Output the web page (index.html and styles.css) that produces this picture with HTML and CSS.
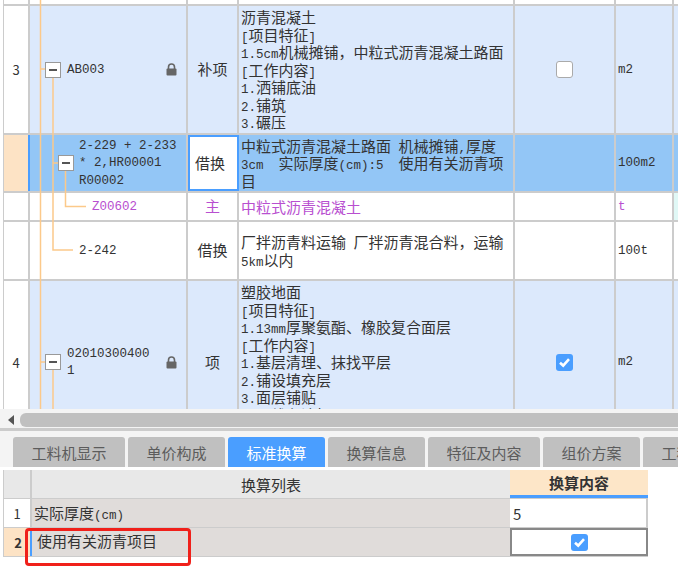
FILE: index.html
```html
<!DOCTYPE html>
<html lang="zh-CN">
<head>
  <meta charset="UTF-8" />
  <title>标准换算</title>
  <link rel="stylesheet" href="styles.css">
</head>
<body>
  <div class="sheet">
    <div class="row stub">
      <div class="cell"></div><div class="cell"></div><div class="cell"></div><div class="cell"></div><div class="cell"></div><div class="cell"></div><div class="cell last"></div>
    </div>

    <div class="row item r3">
      <div class="cell num">3</div>
      <div class="cell tree lvl1">
        <span class="box"></span><span class="code">AB003</span>
        <svg class="lock" width="11" height="13" viewBox="0 0 11 13"><path d="M2.5 6V4a3 3 0 0 1 6 0v2" fill="none" stroke="#666" stroke-width="1.6"/><rect x="0.5" y="5.5" width="10" height="7" rx="1" fill="#666"/></svg>
      </div>
      <div class="cell type">补项</div>
      <div class="cell desc"><div>沥青混凝土<br><span class="n">[</span>项目特征<span class="n">]</span><br><span class="n">1.5cm</span>机械摊铺，中粒式沥青混凝土路面<br><span class="n">[</span>工作内容<span class="n">]</span><br><span class="n">1.</span>洒铺底油<br><span class="n">2.</span>铺筑<br><span class="n">3.</span>碾压</div></div>
      <div class="cell check"><span class="cb"></span></div>
      <div class="cell unit">m2</div>
      <div class="cell last"></div>
    </div>

    <div class="row sel">
      <div class="cell num"></div>
      <div class="cell tree lvl2">
        <span class="box"></span><span class="code">2-229 + 2-233<br>* 2,HR00001<br>R00002</span>
      </div>
      <div class="cell type editing">借换</div>
      <div class="cell desc"><div>中粒式沥青混凝土路面<span class="n">&nbsp;</span>机械摊铺<span class="n">,</span>厚度<br><span class="n">3cm&nbsp;&nbsp;</span>实际厚度<span class="n">(cm):5&nbsp;&nbsp;</span>使用有关沥青项<br>目</div></div>
      <div class="cell check"></div>
      <div class="cell unit">100m2</div>
      <div class="cell last"></div>
    </div>

    <div class="row main">
      <div class="cell num"></div>
      <div class="cell tree lvl3"><span class="code">Z00602</span></div>
      <div class="cell type">主</div>
      <div class="cell desc"><div>中粒式沥青混凝土</div></div>
      <div class="cell check"></div>
      <div class="cell unit">t</div>
      <div class="cell last"></div>
    </div>

    <div class="row sub">
      <div class="cell num"></div>
      <div class="cell tree lvl2b"><span class="code">2-242</span></div>
      <div class="cell type">借换</div>
      <div class="cell desc"><div>厂拌沥青料运输<span class="n">&nbsp;</span>厂拌沥青混合料，运输<br><span class="n">5km</span>以内</div></div>
      <div class="cell check"></div>
      <div class="cell unit">100t</div>
      <div class="cell last"></div>
    </div>

    <div class="row item r4">
      <div class="cell num">4</div>
      <div class="cell tree lvl1">
        <span class="box"></span><span class="code">02010300400<br>1</span>
        <svg class="lock" width="11" height="13" viewBox="0 0 11 13"><path d="M2.5 6V4a3 3 0 0 1 6 0v2" fill="none" stroke="#666" stroke-width="1.6"/><rect x="0.5" y="5.5" width="10" height="7" rx="1" fill="#666"/></svg>
      </div>
      <div class="cell type">项</div>
      <div class="cell desc"><div>塑胶地面<br><span class="n">[</span>项目特征<span class="n">]</span><br><span class="n">1.13mm</span>厚聚氨酯、橡胶复合面层<br><span class="n">[</span>工作内容<span class="n">]</span><br><span class="n">1.</span>基层清理、抹找平层<br><span class="n">2.</span>铺设填充层<br><span class="n">3.</span>面层铺贴<br><span class="n">4.</span>画线条涂标</div></div>
      <div class="cell check">
        <span class="cb on"><svg width="17" height="17" viewBox="0 0 17 17"><path d="M4 8.8l3.2 2.8 5.8-6.4" fill="none" stroke="#fff" stroke-width="2.6"/></svg></span>
      </div>
      <div class="cell unit">m2</div>
      <div class="cell last"></div>
    </div>

    <svg class="links" width="100" height="409" viewBox="0 0 100 409">
      <g fill="none" stroke="#fcc98a" stroke-width="1.5">
        <path d="M40.5 0V409M40 69H45M40 362H45"/>
        <path d="M53 77V250H73M53 163H58M53 370V409"/>
        <path d="M65.5 171V206.5H86"/>
      </g>
    </svg>
  </div>

  <div class="hscroll">
    <span class="arrow"></span>
    <div class="thumb"></div>
  </div>

  <div class="tabs">
    <div class="tab w1">工料机显示</div>
    <div class="tab">单价构成</div>
    <div class="tab active">标准换算</div>
    <div class="tab">换算信息</div>
    <div class="tab w1">特征及内容</div>
    <div class="tab">组价方案</div>
    <div class="tab w1">工程量明细</div>
  </div>

  <div class="convert">
    <div class="c-row head">
      <div class="c-num"></div>
      <div class="c-name">换算列表</div>
      <div class="c-val">换算内容</div>
    </div>
    <div class="c-row">
      <div class="c-num">1</div>
      <div class="c-name"><span>实际厚度<span class="n">(cm)</span></span></div>
      <div class="c-val">5</div>
    </div>
    <div class="c-row current">
      <div class="c-num">2</div>
      <div class="c-name"><span>使用有关沥青项目</span></div>
      <div class="c-val">
        <span class="cb on"><svg width="17" height="17" viewBox="0 0 17 17"><path d="M4 8.8l3.2 2.8 5.8-6.4" fill="none" stroke="#fff" stroke-width="2.6"/></svg></span>
      </div>
    </div>
    <div class="mark"></div>
  </div>
</body>
</html>
```

FILE: styles.css
```css
html, body {
  margin: 0;
  height: 574px;
  overflow: hidden;
  background: white;
}
body {
  font-family: "Noto Sans CJK SC", sans-serif;
  font-size: 15px;
  color: #333;
}
.n, .code, .unit {
  font-family: "Liberation Mono", monospace;
  font-size: 12.5px;
}
.n {
  line-height: 0;
}

/* upper table */
.sheet {
  position: relative;
  height: 409px;
  margin-left: 3px;
  overflow: hidden;
  border-left: 1px solid #ccc;
}
.row {
  display: grid;
  grid-template-columns: 26px 158px 51px 276px 101px 58px 1fr;
  box-sizing: border-box;
  border-bottom: 2px solid #ccc;
}
.cell {
  box-sizing: border-box;
  border-right: 2px solid #ccc;
  display: flex;
  align-items: center;
  min-width: 0;
}
.cell.last {
  border-right: none;
}
.stub { height: 6px; }
.r3 { height: 129px; }
.sel { height: 58px; }
.main { height: 29px; }
.sub { height: 59px; }
.r4 { height: 164px; }

.item .cell { background: #dce9fc; }
.item .num { background: white; }
.sel .cell { background: #93c6f6; }
.sel .num { background: #fde3c5; border-right: 2px solid #4a9eff; }
.main { color: #b84fd0; }
.main .last { background: #e0f8f6; }

.num {
  justify-content: center;
  font-size: 13px;
}
.lvl1 { padding-left: 15px; }
.lvl2 { padding-left: 28px; }
.lvl2b { padding-left: 49px; }
.lvl3 { padding-left: 62px; }
.box {
  flex: none;
  box-sizing: border-box;
  width: 16px;
  height: 16px;
  margin-right: 6px;
  background: white;
  border: 1px solid #999;
  position: relative;
  z-index: 1;
}
.lvl2 .box { margin-right: 5px; }
.box::after {
  content: "";
  display: block;
  width: 8px;
  height: 2px;
  margin: 6px auto 0;
  background: #555;
}
.code {
  padding-top: 2px;
  line-height: 17.5px;
}
.lock {
  margin-left: auto;
  margin-right: 9px;
}
.type {
  justify-content: center;
  padding-bottom: 2px;
}
.row .type.editing {
  justify-content: flex-start;
  padding-left: 5px;
  background: white;
  border: 2px solid #4a9eff;
}
.desc {
  padding-left: 2px;
  line-height: 17.5px;
  white-space: nowrap;
  overflow: hidden;
}
.r4 .desc { align-items: flex-start; padding-top: 2px; }
.check {
  justify-content: center;
}
.cb {
  box-sizing: border-box;
  display: block;
  width: 17px;
  height: 17px;
  background: white;
  border: 1px solid #aaa;
  border-radius: 3px;
}
.cb.on {
  background: #4a9eff;
  border: none;
}
.cb svg { display: block; }
.unit { padding-left: 2px; }
.links {
  position: absolute;
  left: -4px;
  top: 0;
  pointer-events: none;
}

/* scrollbar */
.hscroll {
  display: flex;
  align-items: center;
  box-sizing: border-box;
  height: 22px;
  padding: 4px 0 1px 8px;
  background: #f4f4f4;
  border-bottom: 3px solid #ccc;
}
.arrow {
  width: 0;
  height: 0;
  margin-right: 6px;
  border-top: 5px solid transparent;
  border-bottom: 5px solid transparent;
  border-right: 6px solid #555;
}
.thumb {
  flex: 1;
  height: 14px;
  background: #c0c0c0;
  border-radius: 6px 0 0 6px;
}

/* tabs */
.tabs {
  display: flex;
  gap: 3px;
  height: 36px;
  box-sizing: border-box;
  padding: 6px 0 0 13px;
  background: #f4f4f4;
  overflow: hidden;
}
.tab {
  flex: none;
  width: 97px;
  height: 30px;
  line-height: 32px;
  text-align: center;
  background: #c0c0c0;
  color: #5c5c5c;
  border-radius: 3px 3px 0 0;
  white-space: nowrap;
  overflow: hidden;
}
.tab.w1 { width: 112px; }
.tab.active {
  background: #4a9eff;
  color: white;
}

/* lower table */
.convert {
  position: relative;
  margin: 3px 0 0 3px;
  width: 645px;
}
.c-row {
  display: grid;
  grid-template-columns: 29px 478px 138px;
  height: 29px;
  border-bottom: 1px solid #ccc;
  box-sizing: border-box;
}
.c-num {
  display: flex;
  align-items: center;
  justify-content: center;
  border-right: 2px solid #ccc;
  border-left: 1px solid #ccc;
  font-size: 13px;
}
.c-name {
  display: flex;
  align-items: center;
  padding: 0 0 2px 2px;
  background: #e0dcda;
}
.c-val {
  display: flex;
  align-items: center;
  padding-left: 3px;
  border-right: 2px solid #ccc;
}
.head .c-num, .head .c-name { background: #e8e8e8; }
.head .c-name { justify-content: center; padding: 0; }
.head .c-val {
  justify-content: center;
  padding-left: 0;
  font-weight: bold;
  background: #fde6c8;
  border-bottom: 3px solid #4a9eff;
  border-right: none;
}
.current .c-num {
  background: #fde3c5;
  font-weight: bold;
  border-right: none;
}
.current .c-name {
  margin-left: -2px;
  border-left: 2px solid #4a9eff;
  padding: 0 0 4px 5px;
}
.current .c-val {
  justify-content: center;
  padding-left: 0;
  border: 2px solid #888;
}
.mark {
  position: absolute;
  left: 22px;
  top: 58px;
  width: 160px;
  height: 32px;
  border: 3px solid #f0201a;
  border-radius: 4px;
}
```
